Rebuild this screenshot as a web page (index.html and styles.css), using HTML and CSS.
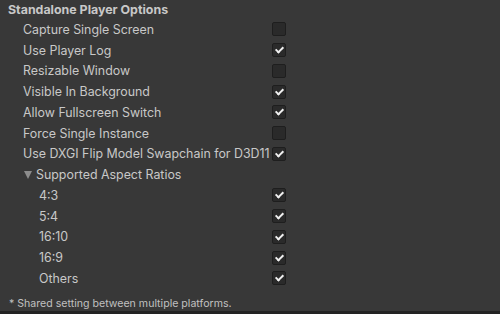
FILE: index.html
```html
<!DOCTYPE html>
<html lang="en">
<head>
    <meta charset="UTF-8">
    <title>Standalone Player Options</title>
    <link rel="stylesheet" href="styles.css">
</head>
<body>
    <div class="panel">
        <div class="section-title">Standalone Player Options</div>

        <div class="rows">
            <label class="row"><span class="label">Capture Single Screen</span><span class="check"></span></label>
            <label class="row"><span class="label">Use Player Log</span><span class="check on"></span></label>
            <label class="row"><span class="label">Resizable Window</span><span class="check"></span></label>
            <label class="row"><span class="label">Visible In Background</span><span class="check on"></span></label>
            <label class="row"><span class="label">Allow Fullscreen Switch</span><span class="check on"></span></label>
            <label class="row"><span class="label">Force Single Instance</span><span class="check"></span></label>
            <label class="row"><span class="label">Use DXGI Flip Model Swapchain for D3D11</span><span class="check on"></span></label>

            <div class="row foldout"><span class="arrow"></span><span class="label">Supported Aspect Ratios</span></div>

            <label class="row sub"><span class="label">4:3</span><span class="check on"></span></label>
            <label class="row sub"><span class="label">5:4</span><span class="check on"></span></label>
            <label class="row sub"><span class="label">16:10</span><span class="check on"></span></label>
            <label class="row sub"><span class="label">16:9</span><span class="check on"></span></label>
            <label class="row sub"><span class="label">Others</span><span class="check on"></span></label>
        </div>

        <p class="note">* Shared setting between multiple platforms.</p>
    </div>
</body>
</html>
```

FILE: styles.css
```css
:root {
    --color-bg: #383838;
    --color-text: #c8c8c8;
    --color-check-bg: #2a2a2a;
    --color-check-border: #1e1e1e;
}

* {
    box-sizing: border-box;
    margin: 0;
    padding: 0;
}

body {
    font-family: Inter, "Noto Sans", sans-serif;
    font-size: 12.4px;
    background-color: var(--color-bg);
    color: var(--color-text);
    width: 500px;
    height: 314px;
    overflow: hidden;
}

.panel {
    height: 314px;
    border-bottom: 3px solid #232323;
    padding: 0 0 0 8px;
}

.section-title {
    font-weight: 700;
    height: 19px;
    line-height: 19px;
}

.rows {
    display: flex;
    flex-direction: column;
}

.row {
    display: flex;
    align-items: center;
    height: 20.75px;
    padding-left: 15px;
}

.row .label {
    flex-shrink: 0;
    width: 249px;
    white-space: nowrap;
}

.row.sub {
    padding-left: 31px;
}

.row.sub .label {
    width: 233px;
}

.foldout .label {
    width: auto;
}

.arrow {
    width: 0;
    height: 0;
    border-left: 4.5px solid transparent;
    border-right: 4.5px solid transparent;
    border-top: 8px solid #8c8c8c;
    margin: 1px 4px 0 1px;
}

.check {
    position: relative;
    flex-shrink: 0;
    width: 14px;
    height: 14px;
    background-color: var(--color-check-bg);
    border: 1px solid var(--color-check-border);
    border-radius: 2px;
}

.check.on::after {
    content: "";
    position: absolute;
    left: 3.5px;
    top: 1px;
    width: 3px;
    height: 6px;
    border-right: 2px solid #f0f0f0;
    border-bottom: 2px solid #f0f0f0;
    transform: rotate(45deg);
}

.note {
    font-size: 10.6px;
    margin-top: 8px;
    padding-left: 1px;
    color: #c0c0c0;
}
```
